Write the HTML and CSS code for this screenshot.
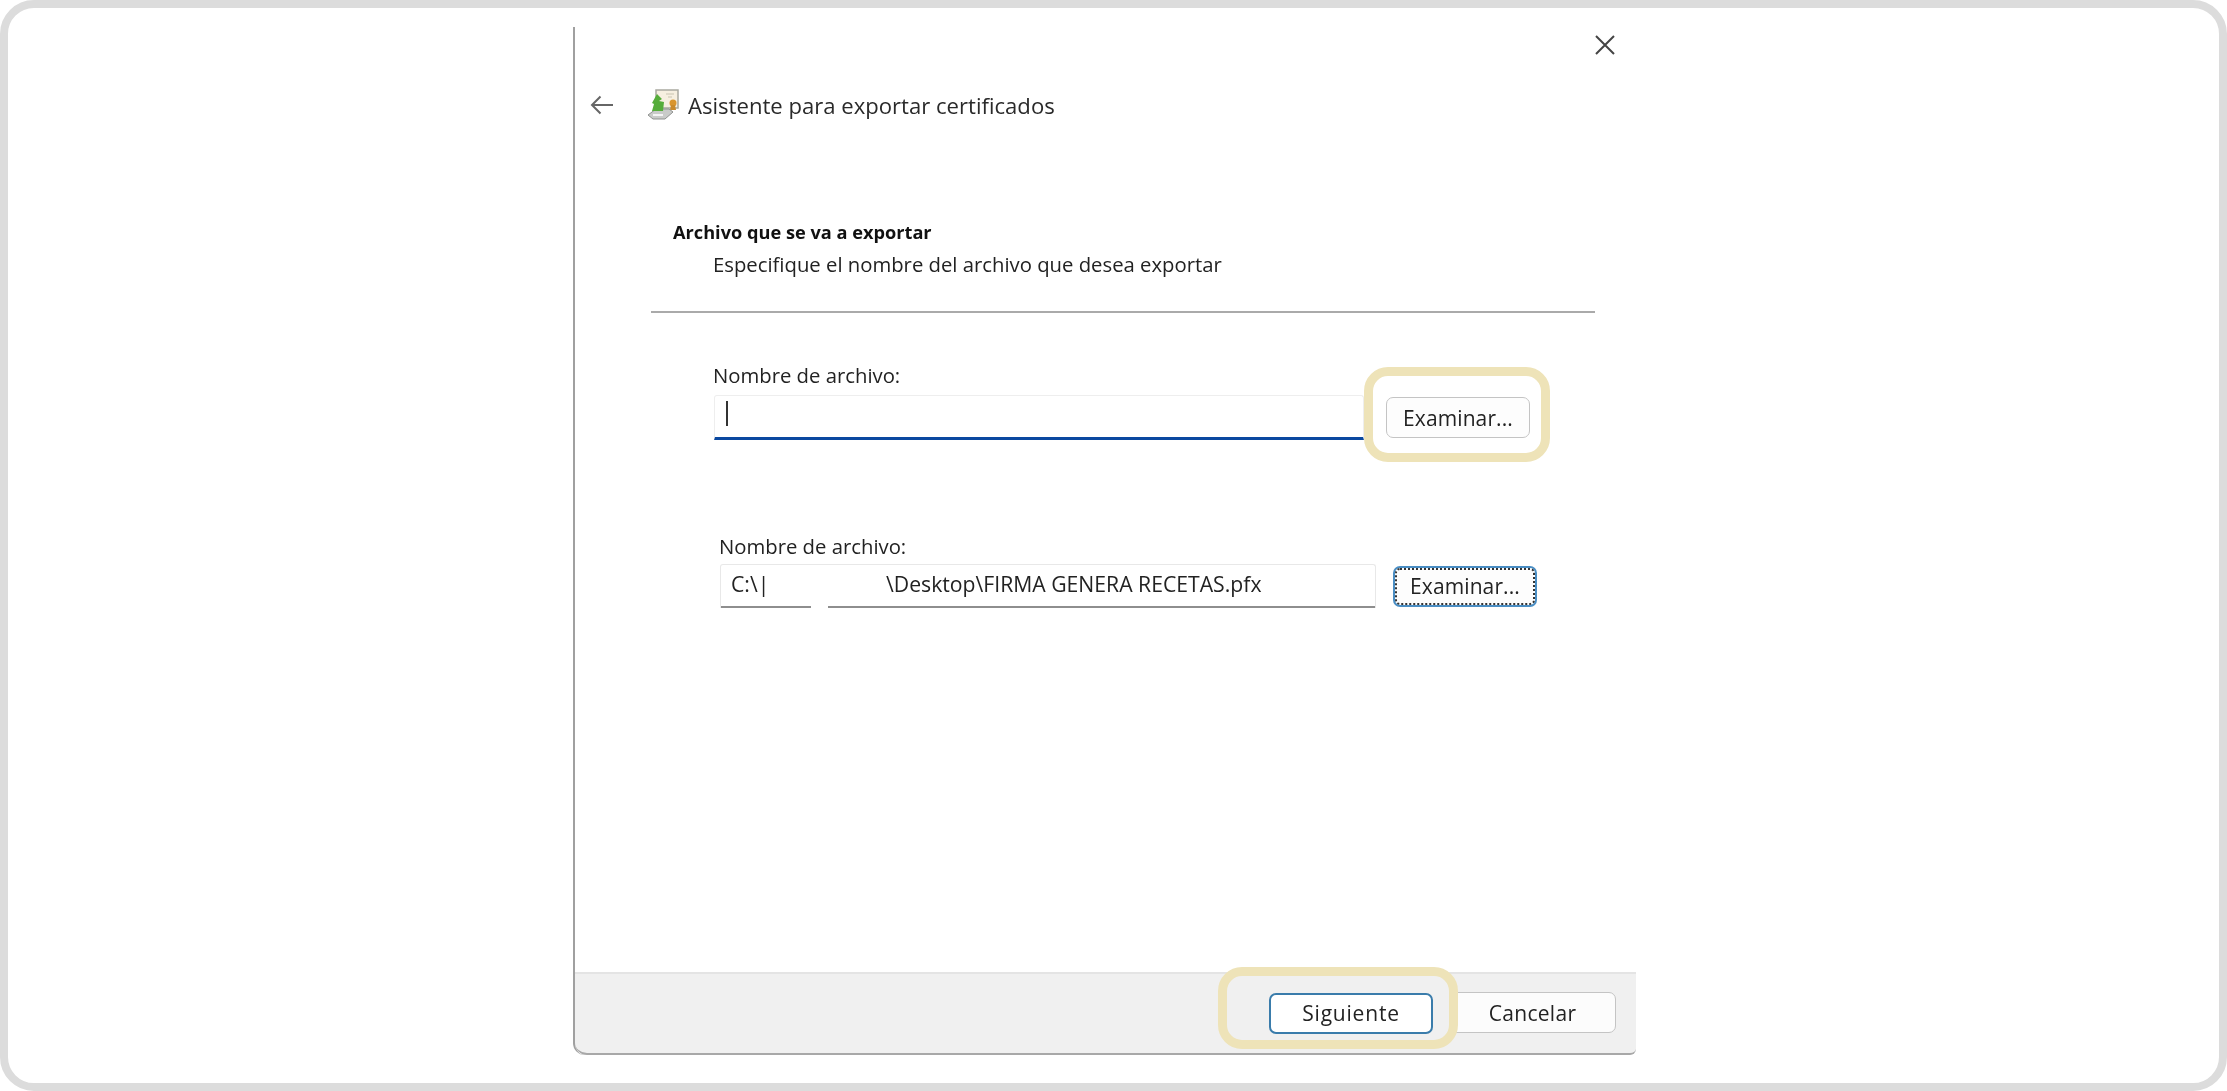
FILE: index.html
```html
<!DOCTYPE html>
<html lang="es">
<head>
  <meta charset="UTF-8">
  <title>Asistente para exportar certificados</title>
  <link rel="stylesheet" href="styles.css">
</head>
<body>

  <div class="frame">
    <div class="dialog">

      <div class="close-row">
        <svg class="close-icon" viewBox="0 0 20 20" width="20" height="20">
          <path d="M1 1L19 19M19 1L1 19" stroke="#444" stroke-width="2" fill="none"/>
        </svg>
      </div>

      <div class="title-row">
        <svg class="back-icon" viewBox="0 0 24 20" width="24" height="20">
          <path d="M23 10H2M10.5 1.5L2 10l8.5 8.5" stroke="#666" stroke-width="2" fill="none"/>
        </svg>
        <svg class="cert-icon" viewBox="0 0 32 32" width="32" height="32">
          <rect x="9" y="1" width="22" height="18" fill="#f6efe0" stroke="#a9a9a0" stroke-width="1.5"/>
          <path d="M19 5h8M21 8h4" stroke="#d8d2c0" stroke-width="1.5"/>
          <circle cx="26" cy="14" r="3.5" fill="#d9952e"/>
          <path d="M24 16l-1 5h6l-1-5z" fill="#c98a2c"/>
          <path d="M1 26l8-6h13l4 3-8 7H6z" fill="#c9cbc9" stroke="#8f918f"/>
          <path d="M6 26h10" stroke="#f4f4f4" stroke-width="2"/>
          <path d="M10 5l5 5-3 2 5 1-1 9H5l2-7-2-1z" fill="#56ad3a"/>
        </svg>
        <span class="wizard-title">Asistente para exportar certificados</span>
      </div>

      <div class="content">
        <div class="step-title">Archivo que se va a exportar</div>
        <div class="step-desc">Especifique el nombre del archivo que desea exportar</div>
        <div class="divider"></div>

        <div class="field">
          <label class="field-label field-label-tight">Nombre de archivo:</label>
          <div class="field-row">
            <div class="file-input"><span class="caret"></span></div>
            <div class="mark mark-browse">
              <button class="btn btn-browse">Examinar...</button>
            </div>
          </div>
        </div>

        <div class="field field-old">
          <label class="field-label">Nombre de archivo:</label>
          <div class="field-row">
            <div class="file-path">
              <span class="path-part path-drive">C:\|</span>
              <span class="path-part path-rest">\Desktop\FIRMA GENERA RECETAS.pfx</span>
            </div>
            <button class="btn btn-browse btn-focus">Examinar...</button>
          </div>
        </div>
      </div>

      <div class="footer">
        <div class="mark mark-next">
          <button class="btn btn-next">Siguiente</button>
        </div>
        <button class="btn btn-cancel">Cancelar</button>
      </div>

    </div>
  </div>

</body>
</html>
```

FILE: styles.css
```css
* {
  box-sizing: border-box;
}

html, body {
  margin: 0;
  height: 100%;
  background-color: #fff;
}

body {
  font-family: "Open Sans", "Noto Sans", sans-serif;
  color: #222;
}

.frame {
  height: 1091px;
  border: 8px solid #dcdcdc;
  border-radius: 34px;
  background-color: #fff;
  padding: 19px 0 28px 565px;
  display: flex;
}

.dialog {
  width: 1063px;
  border-left: 2px solid #a0a0a0;
  border-bottom-left-radius: 12px;
  display: flex;
  flex-direction: column;
  filter: blur(0.5px);
}

.close-row {
  display: flex;
  justify-content: flex-end;
  padding: 8px 21px 0 0;
  height: 41px;
}

.title-row {
  display: flex;
  align-items: center;
  height: 74px;
  padding-left: 15px;
}

.back-icon {
  margin-right: 33px;
}

.cert-icon {
  margin-right: 9px;
}

.wizard-title {
  font-size: 22.1px;
  color: #2a2a2a;
}

.content {
  flex: 1;
  padding: 0 41px 0 76px;
}

.step-title {
  margin: 79px 0 0 22px;
  font-size: 18.2px;
  font-weight: 700;
  line-height: 22px;
  color: #111;
}

.step-desc {
  margin: 9px 0 0 62px;
  font-size: 20.3px;
  line-height: 24px;
}

.divider {
  height: 2px;
  background-color: #aaa;
  margin-top: 35px;
}

.field {
  margin: 50px 0 0 62px;
}

.field-label {
  display: block;
  font-size: 20.3px;
  line-height: 24px;
  margin-bottom: 6px;
}

.field-label-tight {
  margin-bottom: -20px;
}

.field-row {
  display: flex;
  align-items: center;
}

.file-input {
  width: 650px;
  height: 45px;
  margin: 6px 0 0 1px;
  border: 1px solid #eee;
  border-bottom: 3px solid #0a48a0;
  border-radius: 3px 3px 0 0;
  padding: 5px 0 0 11px;
}

.caret {
  display: block;
  width: 2px;
  height: 25px;
  background-color: #333;
}

.mark {
  border: 9px solid #eee3b8;
  border-radius: 24px;
  display: flex;
}

.mark-browse {
  width: 186px;
  height: 95px;
  padding: 21px 0 0 13px;
}

.btn {
  font-family: inherit;
  font-size: 21px;
  color: #222;
  background-color: #fdfdfd;
  border: 1.5px solid #c4c4c4;
  border-radius: 7px;
  height: 41px;
  padding: 0;
  letter-spacing: 0.1px;
}

.btn-browse {
  width: 144px;
}

.field-old {
  margin: 72px 0 0 68px;
}

.file-path {
  display: flex;
  width: 656px;
  height: 44px;
  margin-left: 1px;
  border: 1px solid #e8e8e8;
  border-bottom: none;
  border-radius: 3px 3px 0 0;
  font-size: 21.2px;
  justify-content: space-between;
}

.path-part {
  display: block;
  height: 43px;
  line-height: 38px;
  border-bottom: 2px solid #8e8e8e;
  white-space: nowrap;
}

.path-drive {
  width: 90px;
  padding-left: 10px;
}

.path-rest {
  width: 547px;
  padding-left: 58px;
}

.btn-focus {
  margin-left: 17px;
  border: 2px solid #4a8ec4;
  outline: 2px dotted #333;
  outline-offset: -4px;
}

.footer {
  height: 83px;
  background-color: #f0f0f0;
  border-top: 2px solid #e4e4e4;
  border-bottom: 2px solid #a8a8a8;
  border-bottom-left-radius: 12px;
  border-bottom-right-radius: 6px;
  display: flex;
  align-items: center;
  padding-left: 643px;
}

.mark-next {
  width: 240px;
  height: 82px;
  padding: 17px 0 0 42px;
  margin-top: -12px;
  position: relative;
  z-index: 1;
}

.btn-next {
  width: 164px;
  background-color: #fff;
  border: 2px solid #3a7cab;
  letter-spacing: 0.8px;
}

.btn-cancel {
  width: 167px;
  margin-left: -9px;
  margin-top: -2px;
  background-color: #fcfcfc;
  letter-spacing: 0.3px;
}
```
